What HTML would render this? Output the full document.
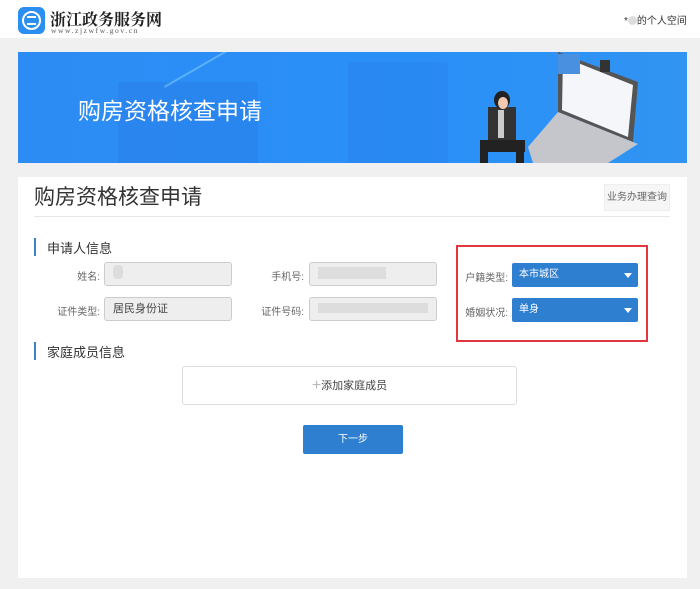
<!DOCTYPE html>
<html><head><meta charset="utf-8"><style>
*{margin:0;padding:0;box-sizing:border-box}
body{width:700px;height:589px;background:#f0f0f0;font-family:"Liberation Sans","Noto Sans CJK SC",sans-serif;position:relative;overflow:hidden;color:#333}
.a{position:absolute}
.hdr{left:0;top:0;width:700px;height:38px;background:#fff}
.inp{background:#eee;border:1px solid #ccc;border-radius:3px;height:24px;width:128px;font-size:11px;line-height:22px;padding-left:8px;color:#444}
.lbl{font-size:10px;color:#666;text-align:right;width:70px}
.sel{background:#2f7fd0;border-radius:2px;height:24px;width:126px;color:#fff;font-size:10px;line-height:24px;padding-left:7px}
.sel:after{content:"";position:absolute;right:6px;top:10px;border:4px solid transparent;border-top:5px solid #fff}
.bar{width:2px;height:18px;background:#3b84cc}
</style></head><body>
<div class="a hdr"></div>
<div class="a" style="left:18px;top:7px;width:27px;height:27px;border-radius:6px;background:#2a8ff0"></div>
<div class="a" style="left:22px;top:11px;width:19px;height:19px;border:2px solid #fff;border-radius:50%"></div>
<div class="a" style="left:27px;top:16px;width:9px;height:9px;border-top:2px solid #fff;border-bottom:2px solid #fff"></div>
<div class="a" style="left:50px;top:7px;font-size:16px;font-weight:bold;font-family:'Noto Serif CJK SC',serif;color:#222">浙江政务服务网</div>
<div class="a" style="left:51px;top:26px;font-size:7.5px;letter-spacing:1.6px;font-family:'Liberation Serif',serif;color:#555">www.zjzwfw.gov.cn</div>
<div class="a" style="left:624px;top:12px;font-size:10px;color:#333">*<span style="display:inline-block;width:9px;height:9px;border-radius:50%;background:#ddd;vertical-align:-1px"></span>的个人空间</div>

<div class="a" style="left:18px;top:52px;width:669px;height:111px;background:linear-gradient(90deg,#2c8cf4,#2a90f8 60%,#3194f2);overflow:hidden">
<div class="a" style="left:100px;top:30px;width:140px;height:81px;background:rgba(40,110,220,.25)"></div>
<div class="a" style="left:330px;top:10px;width:100px;height:101px;background:rgba(40,110,220,.2)"></div>
<div class="a" style="left:60px;top:40px;font-size:23px;color:#fff">购房资格核查申请</div>
<div class="a" style="left:232px;top:-15px;width:2px;height:100px;background:rgba(120,200,255,.6);transform:rotate(60deg);transform-origin:top"></div>
<svg class="a" style="left:420px;top:0" width="230" height="111">
<polygon points="120,0 200,30 195,90 120,60" fill="#555"/>
<polygon points="125,5 195,33 190,85 124,58" fill="#f4f6fa"/>
<rect x="120" y="2" width="22" height="20" fill="#4a90e0"/>
<polygon points="90,95 120,60 200,92 170,111 95,111" fill="#c4c6cc"/>
<rect x="162" y="8" width="10" height="12" fill="#333"/>
<rect x="50" y="55" width="28" height="40" fill="#333"/>
<rect x="60" y="58" width="6" height="28" fill="#ccc"/>
<ellipse cx="64" cy="48" rx="8" ry="9" fill="#222"/>
<ellipse cx="65" cy="51" rx="5" ry="6" fill="#f2c8b0"/>
<rect x="42" y="88" width="45" height="12" fill="#222"/>
<rect x="42" y="95" width="8" height="16" fill="#222"/><rect x="78" y="95" width="8" height="16" fill="#222"/>
</svg>
</div>

<div class="a" style="left:18px;top:177px;width:669px;height:401px;background:#fff"></div>
<div class="a" style="left:34px;top:181px;font-size:21px;color:#333">购房资格核查申请</div>
<div class="a" style="left:34px;top:216px;width:636px;height:1px;background:#e6e6e6"></div>
<div class="a" style="left:604px;top:184px;width:66px;height:27px;background:#f6f6f6;border:1px solid #eee;font-size:10px;color:#666;text-align:center;line-height:25px">业务办理查询</div>

<div class="a bar" style="left:34px;top:238px"></div>
<div class="a" style="left:47px;top:238px;font-size:13px">申请人信息</div>
<div class="a lbl" style="left:30px;top:268px">姓名:</div>
<div class="a inp" style="left:104px;top:262px"><span style="display:inline-block;width:10px;height:14px;background:#ddd;border-radius:4px;vertical-align:-2px"></span></div>
<div class="a lbl" style="left:234px;top:268px">手机号:</div>
<div class="a inp" style="left:309px;top:262px"><span style="display:inline-block;width:68px;height:12px;background:#ddd;vertical-align:-2px"></span></div>
<div class="a lbl" style="left:30px;top:303px">证件类型:</div>
<div class="a inp" style="left:104px;top:297px">居民身份证</div>
<div class="a lbl" style="left:234px;top:303px">证件号码:</div>
<div class="a inp" style="left:309px;top:297px"><span style="display:inline-block;width:110px;height:10px;background:#ddd;vertical-align:-1px"></span></div>

<div class="a" style="left:456px;top:245px;width:192px;height:97px;border:2px solid #e0383e"></div>
<div class="a lbl" style="left:438px;top:269px;width:70px">户籍类型:</div>
<div class="a sel" style="left:512px;top:263px">本市城区</div>
<div class="a lbl" style="left:438px;top:304px;width:70px">婚姻状况:</div>
<div class="a sel" style="left:512px;top:298px">单身</div>

<div class="a bar" style="left:34px;top:342px"></div>
<div class="a" style="left:47px;top:342px;font-size:13px">家庭成员信息</div>
<div class="a" style="left:182px;top:366px;width:335px;height:39px;border:1px solid #ddd;border-radius:3px;text-align:center;line-height:37px;font-size:11px;color:#444"><span style="color:#bbb;font-size:16px;vertical-align:-1px">+</span>添加家庭成员</div>
<div class="a" style="left:303px;top:425px;width:100px;height:29px;background:#2f7fd0;border-radius:2px;color:#fff;font-size:10px;text-align:center;line-height:29px">下一步</div>
</body></html>
